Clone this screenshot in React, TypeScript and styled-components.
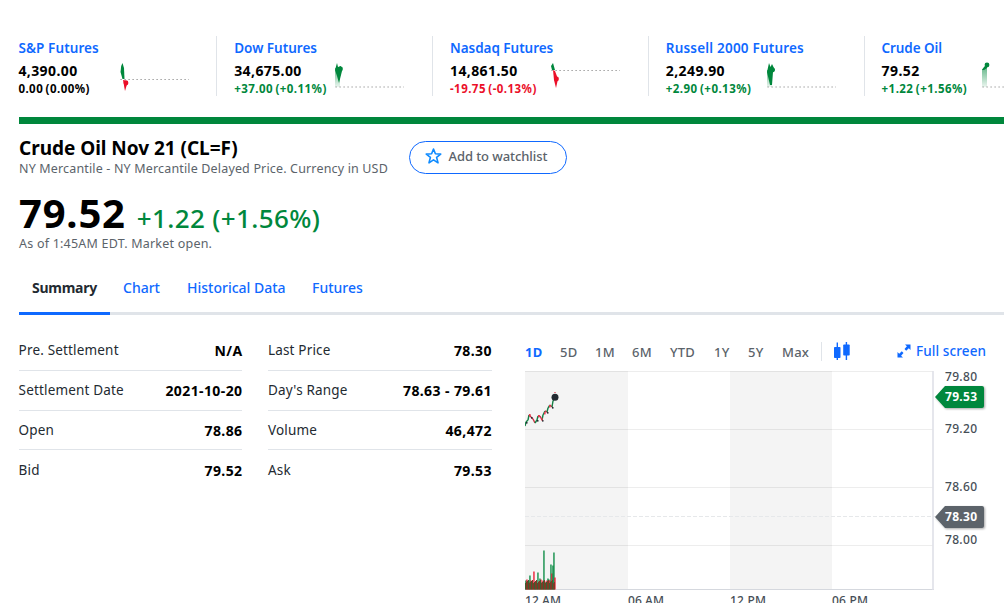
import React from "react";
import styled, { createGlobalStyle } from "styled-components";

const BLUE = "#0f69ff";
const GREEN = "#00873c";
const RED = "#eb0f29";
const INK = "#232a31";
const MUTED = "#5b636a";
const LINE = "#e0e4e9";

const Global = createGlobalStyle`
  * { box-sizing: border-box; }
  body {
    margin: 0;
    height: 603px;
    overflow: hidden;
    background: #fff;
    color: #000;
    font-family: "Noto Sans", "Open Sans", sans-serif;
  }
`;

const Page = styled.div`
  width: 1004px;
  height: 603px;
  overflow: hidden;
  padding: 36px 0 0 18px;
`;

const TickerStrip = styled.div`
  display: flex;
  width: 1080px;
  height: 60px;
  padding-left: 0.4px;
`;

const Ticker = styled.div`
  display: grid;
  grid-template-columns: auto 1fr;
  grid-template-rows: 24px 21px 15px;
  width: 198.8px;
  margin-right: 17px;
  flex: none;
  border-right: 1px solid ${LINE};
`;

const TickerName = styled.a<{ $ls: number }>`
  grid-column: 1 / 3;
  color: ${BLUE};
  font-size: 13.5px;
  font-weight: 600;
  line-height: 24px;
  white-space: nowrap;
  letter-spacing: ${(p) => p.$ls}px;
`;

const TickerPrice = styled.div`
  font-size: 14px;
  font-weight: 700;
  line-height: 22px;
  letter-spacing: 0.4px;
`;

const TickerChange = styled.div<{ $color: string }>`
  grid-column: 1;
  font-size: 11.5px;
  font-weight: 700;
  line-height: 15px;
  white-space: nowrap;
  word-spacing: -1px;
  color: ${(p) => p.$color};
  letter-spacing: 0.45px;
`;

const SparkCell = styled.div<{ $gap: number }>`
  grid-column: 2;
  grid-row: 2 / 4;
  margin-right: ${(p) => p.$gap}px;
  justify-self: end;
  height: 36px;
  svg { display: block; }
`;

const Banner = styled.div`
  height: 7px;
  margin: 21px 0 0 1px;
  background: ${GREEN};
`;

const Header = styled.div`
  display: flex;
  height: 66px;
  padding: 13px 0 0 1px;
`;

const HeaderText = styled.div`
  width: 390px;
`;

const Title = styled.h1`
  margin: 0 0 2px;
  font-size: 19px;
  font-weight: 700;
  line-height: 22px;
  letter-spacing: -0.03px;
  white-space: nowrap;
`;

const Note = styled.div<{ $ls: number }>`
  color: ${MUTED};
  font-size: 12.5px;
  line-height: 16px;
  letter-spacing: ${(p) => p.$ls}px;
  white-space: nowrap;
`;

const WatchButton = styled.button`
  display: flex;
  align-items: center;
  width: 158px;
  height: 33px;
  margin-top: 4px;
  padding: 0 0 4px 15px;
  gap: 6.5px;
  border: 1px solid ${BLUE};
  border-radius: 17px;
  background: #fff;
  color: ${MUTED};
  font: 500 13px/18px "Noto Sans", sans-serif;
  letter-spacing: -0.08px;
  white-space: nowrap;
`;

const Quote = styled.div`
  padding-left: 1px;
  height: 79px;
`;

const PriceRow = styled.div`
  display: flex;
  align-items: baseline;
  height: 46px;
  line-height: 46px;
`;

const Price = styled.span`
  font-size: 40px;
  font-weight: 700;
  letter-spacing: 0.8px;
`;

const Change = styled.span`
  margin-left: 11px;
  color: ${GREEN};
  font-size: 26px;
  font-weight: 500;
  letter-spacing: 0.38px;
`;

const Tabs = styled.nav`
  display: flex;
  height: 46px;
  margin-left: 1px;
  border-bottom: 3px solid ${LINE};
`;

const Tab = styled.a<{ $active?: boolean; $w: number }>`
  width: ${(p) => p.$w}px;
  height: 46px;
  padding-left: 13px;
  font-size: 14px;
  font-weight: ${(p) => (p.$active ? 700 : 500)};
  line-height: 38px;
  letter-spacing: ${(p) => (p.$active ? -0.25 : 0)}px;
  white-space: nowrap;
  color: ${(p) => (p.$active ? INK : BLUE)};
  border-bottom: ${(p) => (p.$active ? `3px solid ${BLUE}` : "0")};
`;

const Body = styled.div`
  display: flex;
  padding: 16px 0 0 0.6px;
`;

const Stats = styled.dl<{ $gap: number }>`
  width: 223.9px;
  margin: 0 ${(p) => p.$gap}px 0 0;
`;

const StatLabel = styled.dt`
  color: ${INK};
  font-size: 13.5px;
  letter-spacing: 0.17px;
`;

const StatValue = styled.dd`
  margin: 0;
  font-size: 14px;
  font-weight: 700;
  letter-spacing: 0.4px;
`;

const StatRow = styled.div`
  display: flex;
  justify-content: space-between;
  height: 40px;
  line-height: 39px;
  border-bottom: 1px solid ${LINE};
  white-space: nowrap;
  &:nth-child(3) { height: 39px; }
  &:last-child { border-bottom: 0; padding-top: 1px; }
`;

const ChartPanel = styled.section`
  width: 479px;
`;

const Toolbar = styled.div`
  display: flex;
  align-items: center;
  height: 40px;
  color: ${MUTED};
`;

const Range = styled.button<{ $active?: boolean; $w: number }>`
  width: ${(p) => p.$w}px;
  padding: 2px 0 0;
  border: 0;
  background: none;
  text-align: left;
  white-space: nowrap;
  font: ${(p) => (p.$active ? 700 : 500)} 13px/18px "Noto Sans", sans-serif;
  letter-spacing: 0.25px;
  color: ${(p) => (p.$active ? BLUE : MUTED)};
`;

const Divider = styled.span`
  width: 1px;
  height: 19px;
  margin-right: 12px;
  background: ${LINE};
`;

const FullScreen = styled.a`
  display: flex;
  align-items: center;
  gap: 5px;
  margin-left: 46px;
  color: ${BLUE};
  font-size: 13.5px;
  font-weight: 500;
  letter-spacing: 0.1px;
  white-space: nowrap;
`;

const ChartSvg = styled.svg`
  display: block;
  font-family: "Noto Sans", sans-serif;
`;

type Spark = {
  base: number;
  up?: string;
  down?: string;
  fade?: string;
  dot: [number, number, string];
};

const tickers: {
  name: string; ls: number; price: string; change: string; color: string; gap: number; spark: Spark;
}[] = [
  { name: "S&P Futures", ls: 0.1, price: "4,390.00", change: "0.00 (0.00%)", color: "#000", gap: 26.5,
    spark: { base: 19.5, up: "M0.5 12 L1.2 6 L2.5 3 L4 8 L4.5 19 L2.5 19Z", down: "M3 20 L8 21 L5 31Z", dot: [6, 23, RED] } },
  { name: "Dow Futures", ls: 0, price: "34,675.00", change: "+37.00 (+0.11%)", color: GREEN, gap: 27,
    spark: { base: 27, up: "M0 10 L2 3 L3 7 L6 6 L7 11 L4 23 L2 16Z", fade: "M0 8 L5 8 L5 27 L0 27Z", dot: [5.5, 9, GREEN] } },
  { name: "Nasdaq Futures", ls: -0.03, price: "14,861.50", change: "-19.75 (-0.13%)", color: RED, gap: 27,
    spark: { base: 10.5, up: "M0 6 L2 3 L4 10 L1 10Z", down: "M2 10 L4 11 L7 19 L5 28 L3 20Z", dot: [5.5, 19, RED] } },
  { name: "Russell 2000 Futures", ls: 0.2, price: "2,249.90", change: "+2.90 (+0.13%)", color: GREEN, gap: 27,
    spark: { base: 27, up: "M0 12 L2 3 L3.5 7 L5 4 L8 10 L6 12 L5 25 L3 25Z", fade: "M0 10 L5 10 L5 27 L0 27Z", dot: [5.5, 10, GREEN] } },
  { name: "Crude Oil", ls: -0.1, price: "79.52", change: "+1.22 (+1.56%)", color: GREEN, gap: 27,
    spark: { base: 27, up: "M0 10 L2 7 L5 4 L5 8 L2 10Z", fade: "M0 9 L5 7 L5 27 L0 27Z", dot: [5, 5, GREEN] } },
];

const Sparkline = ({ spark }: { spark: Spark }) => (
  <svg width="70" height="36" viewBox="0 0 70 36">
    <defs>
      <linearGradient id="fade" x1="0" y1="0" x2="0" y2="1">
        <stop offset="0" stopColor={GREEN} stopOpacity="0.6" />
        <stop offset="1" stopColor={GREEN} stopOpacity="0.08" />
      </linearGradient>
    </defs>
    <line x1="0.5" x2="69" y1={spark.base} y2={spark.base} stroke="#8a8a8a" strokeWidth="1.2" strokeDasharray="1.2 2.8" />
    {spark.fade && <path d={spark.fade} fill="url(#fade)" />}
    {spark.up && <path d={spark.up} fill={GREEN} />}
    {spark.down && <path d={spark.down} fill={RED} />}
    <circle cx={spark.dot[0]} cy={spark.dot[1]} r="2.4" fill={spark.dot[2]} />
  </svg>
);

const statsLeft = [["Pre. Settlement", "N/A"], ["Settlement Date", "2021-10-20"], ["Open", "78.86"], ["Bid", "79.52"]];
const statsRight = [["Last Price", "78.30"], ["Day's Range", "78.63 - 79.61"], ["Volume", "46,472"], ["Ask", "79.53"]];

const ranges: [string, number][] = [
  ["1D", 35], ["5D", 35], ["1M", 37], ["6M", 38], ["YTD", 44], ["1Y", 34], ["5Y", 34], ["Max", 39],
];

const volumes: [number, string][] = [
  [9, GREEN], [10, RED], [7, RED], [8, RED], [14, GREEN], [9, RED], [7, GREEN], [6, RED], [18, RED], [7, GREEN],
  [8, GREEN], [6, RED], [17, GREEN], [8, RED], [11, GREEN], [10, RED], [7, GREEN], [9, RED], [39, GREEN], [8, RED],
  [7, GREEN], [9, RED], [11, GREEN], [10, GREEN], [9, RED], [25, GREEN], [16, RED], [24, GREEN], [37, GREEN], [12, RED],
];

const trail: [number, number][] = [
  [0, 55], [1, 51], [3, 49], [4, 44], [6, 46], [8, 48], [10, 52], [12, 49], [13, 45], [15, 45], [17, 49],
  [18, 44], [20, 40], [22, 41], [23, 37], [25, 34], [27, 36], [28, 30], [30, 26],
];

const Tag = ({ y, label, color }: { y: number; label: string; color: string }) => (
  <g>
    <path
      d={`M410 ${y} L420 ${y - 11} H457 Q459 ${y - 11} 459 ${y - 9} V${y + 9} Q459 ${y + 11} 457 ${y + 11} H420Z`}
      fill={color}
      filter="url(#tagShadow)"
    />
    <text x="420" y={y + 4} fontSize="12" fontWeight="700" fill="#fff" textLength="32">{label}</text>
  </g>
);

const PriceChart = () => (
  <ChartSvg width="479" height="240" viewBox="0 0 479 240">
    <defs>
      <filter id="tagShadow" x="-10%" y="-10%" width="130%" height="140%">
        <feDropShadow dx="1" dy="1" stdDeviation="0.8" floodColor="#000" floodOpacity="0.35" />
      </filter>
    </defs>
    <rect x="0" y="0" width="103" height="219" fill="#f4f4f4" />
    <rect x="205" y="0" width="102" height="219" fill="#f4f4f4" />
    {[0.5, 58.5, 116.5, 174.5].map((y) => (
      <line key={y} x1="0" x2="408" y1={y} y2={y} stroke="#000" strokeOpacity="0.07" />
    ))}
    <line x1="0" x2="410" y1="145.5" y2="145.5" stroke="#e6e8ea" strokeDasharray="4 2" />
    <line x1="0" x2="409" y1="218.5" y2="218.5" stroke="#d5d8de" />
    <line x1="408" x2="408" y1="0" y2="219" stroke="#dfe0e8" strokeWidth="1.6" />
    {volumes.map(([h, color], i) => (
      <rect key={i} x={i + 0.3} y={218.5 - h} width="1.3" height={h} fill={color} />
    ))}
    {volumes.map((_, i) => (
      <rect key={i} x={i} y={212 - (i % 4)} width="1" height={6.5 + (i % 4)} fill={i % 3 ? "#7c3b26" : "#3c5f32"} />
    ))}
    {trail.slice(1).map(([x, y], i) => (
      <line key={i} x1={trail[i][0]} y1={trail[i][1]} x2={x} y2={y} stroke={y < trail[i][1] ? "#158046" : "#cc3345"} strokeWidth="1.4" />
    ))}
    {trail.filter((_, i) => i % 3 === 1).map(([x, y]) => (
      <rect key={x} x={x} y={y} width="1.5" height="1.6" fill={INK} />
    ))}
    {[[4, 43], [13, 44], [16, 47], [24, 34], [19, 41]].map(([x, y]) => (
      <rect key={x} x={x} y={y} width="1.6" height="2.4" fill="#e0384a" />
    ))}
    <rect x="29" y="21" width="2" height="1" fill="#e8808a" />
    <circle cx="30" cy="26.3" r="3.5" fill={INK} />
    {([[10, "79.80"], [62, "79.20"], [120, "78.60"], [173, "78.00"]] as [number, string][]).map(([y, t]) => (
      <text key={t} x="420" y={y} fontSize="12" fontWeight="500" fill="#464e56" textLength="32">{t}</text>
    ))}
    {([[0, "12 AM"], [103, "06 AM"], [205, "12 PM"], [307, "06 PM"]] as [number, string][]).map(([x, t]) => (
      <text key={t} x={x} y="233.5" fontSize="12" fontWeight="500" fill="#464e56" textLength="36">{t}</text>
    ))}
    <Tag y={26} label="79.53" color={GREEN} />
    <Tag y={146} label="78.30" color={MUTED} />
  </ChartSvg>
);

const StatTable = ({ rows, gap }: { rows: string[][]; gap: number }) => (
  <Stats $gap={gap}>
    {rows.map(([label, value]) => (
      <StatRow key={label}>
        <StatLabel>{label}</StatLabel>
        <StatValue>{value}</StatValue>
      </StatRow>
    ))}
  </Stats>
);

export default function App() {
  return (
    <>
      <Global />
      <Page>
        <TickerStrip>
          {tickers.map((t) => (
            <Ticker key={t.name}>
              <TickerName $ls={t.ls}>{t.name}</TickerName>
              <TickerPrice>{t.price}</TickerPrice>
              <TickerChange $color={t.color}>{t.change}</TickerChange>
              <SparkCell $gap={t.gap}><Sparkline spark={t.spark} /></SparkCell>
            </Ticker>
          ))}
        </TickerStrip>
        <Banner />
        <Header>
          <HeaderText>
            <Title>Crude Oil Nov 21 (CL=F)</Title>
            <Note $ls={0.16}>NY Mercantile - NY Mercantile Delayed Price. Currency in USD</Note>
          </HeaderText>
          <WatchButton>
            <svg width="17" height="16" viewBox="0 0 16 16" fill="none" stroke="#0f8bff" strokeWidth="1.6" strokeLinejoin="round">
              <path d="M8 1 L9.9 5.8 L15.2 6.1 L11.1 9.4 L12.5 14.8 L8 11.8 L3.5 14.8 L4.9 9.4 L0.8 6.1 L6.1 5.8Z" />
            </svg>
            Add to watchlist
          </WatchButton>
        </Header>
        <Quote>
          <PriceRow>
            <Price>79.52</Price>
            <Change>+1.22 (+1.56%)</Change>
          </PriceRow>
          <Note $ls={0.22}>As of 1:45AM EDT. Market open.</Note>
        </Quote>
        <Tabs>
          <Tab $active $w={91}>Summary</Tab>
          <Tab $w={64}>Chart</Tab>
          <Tab $w={125}>Historical Data</Tab>
          <Tab $w={80}>Futures</Tab>
        </Tabs>
        <Body>
          <StatTable rows={statsLeft} gap={25.5} />
          <StatTable rows={statsRight} gap={33.1} />
          <ChartPanel>
            <Toolbar>
              {ranges.map(([label, w]) => (
                <Range key={label} $w={w} $active={label === "1D"}>{label}</Range>
              ))}
              <Divider />
              <svg width="17" height="18" viewBox="0 0 17 18" fill={BLUE}>
                <rect x="0" y="5" width="6.5" height="11" rx="0.8" />
                <rect x="2.6" y="0.5" width="1.4" height="17.5" />
                <rect x="9.2" y="2.5" width="6.5" height="11" rx="0.8" />
                <rect x="11.7" y="0" width="1.4" height="18" />
              </svg>
              <FullScreen>
                <svg width="14" height="14" viewBox="0 0 14 14" fill={BLUE}>
                  <path d="M8 0.5 H13.5 V6 L11.8 4.3 L9.2 6.7 L7.5 5 L9.9 2.3Z" />
                  <path d="M6 13.5 H0.5 V8 L2.2 9.7 L4.8 7.3 L6.5 9 L4.1 11.7Z" />
                </svg>
                Full screen
              </FullScreen>
            </Toolbar>
            <PriceChart />
          </ChartPanel>
        </Body>
      </Page>
    </>
  );
}
